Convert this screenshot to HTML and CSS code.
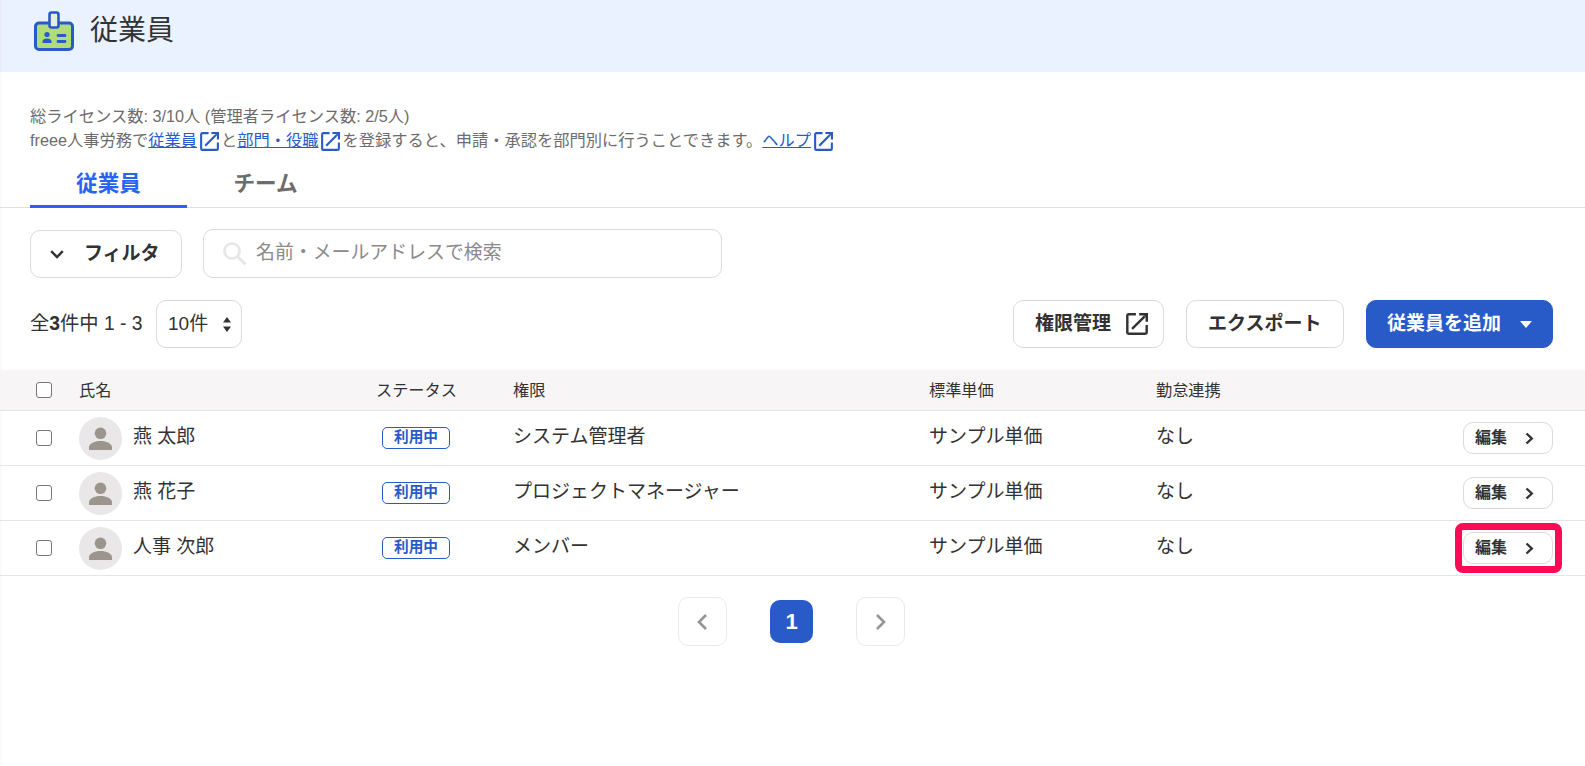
FILE: index.html
```html
<!DOCTYPE html>
<html lang="ja">
<head>
<meta charset="UTF-8">
<meta name="viewport" content="width=device-width, initial-scale=1.0">
<title>従業員</title>
<link rel="stylesheet" href="styles.css">
</head>
<body>
<!-- shared icons -->
<svg class="defs">
    <symbol id="external" viewBox="0 0 20 20">
        <path d="M9 1.2H2.4a1.2 1.2 0 0 0-1.2 1.2v15.2a1.2 1.2 0 0 0 1.2 1.2h15.2a1.2 1.2 0 0 0 1.2-1.2V11" fill="none" stroke="currentColor" stroke-width="2.2"/>
        <path d="M5.5 14.5L17 3" fill="none" stroke="currentColor" stroke-width="2.2"/>
        <path d="M12 0h8v8h-2.2V3.6L16.4 2.2H12z" fill="currentColor"/>
    </symbol>
    <symbol id="person" viewBox="0 0 43 43">
        <circle cx="21.5" cy="16.3" r="5.8" fill="#9b958d"/>
        <path d="M10 33v-2.5C10 26.5 15.5 24 21.5 24S33 26.5 33 30.5V33z" fill="#9b958d"/>
    </symbol>
    <symbol id="chevron" viewBox="0 0 9 13">
        <path d="M1.5 1.5L6.8 6.5L1.5 11.5" fill="none" stroke="currentColor" stroke-width="2.4"/>
    </symbol>
</svg>

<div class="header">
    <svg class="header-icon" viewBox="0 0 40 40">
        <rect x="1.5" y="12" width="37" height="26.5" rx="3.5" fill="#b2dc7a" stroke="#285ac8" stroke-width="3"/>
        <rect x="15.5" y="1.5" width="9" height="15" rx="2" fill="#e6efd8" stroke="#285ac8" stroke-width="2.6"/>
        <circle cx="13" cy="23.5" r="2.6" fill="#285ac8"/>
        <path d="M8.5 32v-1.500c0-2 2-3 4.500-3s4.500 1 4.500 3V32z" fill="#285ac8"/>
        <path d="M24 24.5h7M24 30.5h7" stroke="#285ac8" stroke-width="2.8" stroke-linecap="round"/>
    </svg>
    <h1 class="title">従業員</h1>
</div>

<div class="info">
    <p>総ライセンス数: 3/10人 (管理者ライセンス数: 2/5人)</p>
    <p>freee人事労務で<a href="#">従業員</a><svg class="link-icon"><use href="#external"/></svg>と<a href="#">部門・役職</a><svg class="link-icon"><use href="#external"/></svg>を登録すると、申請・承認を部門別に行うことできます。<a href="#">ヘルプ</a><svg class="link-icon"><use href="#external"/></svg></p>
</div>

<div class="tabs">
    <div class="tab active">従業員</div>
    <div class="tab">チーム</div>
</div>

<div class="filters">
    <button class="btn btn-filter"><svg class="icon-down" viewBox="0 0 14 9"><path d="M1.2 1.2L7 7L12.8 1.2" fill="none" stroke="currentColor" stroke-width="2.4"/></svg><span>フィルタ</span></button>
    <div class="search">
        <svg class="search-icon" viewBox="0 0 24 24"><circle cx="9" cy="9" r="7.5" fill="none" stroke="#e6e6e6" stroke-width="2.6"/><path d="M14.5 14.5L22.5 22.5" stroke="#e6e6e6" stroke-width="3"/></svg>
        <input type="text" class="search-input" placeholder="名前・メールアドレスで検索">
    </div>
</div>

<div class="toolbar">
    <div class="count">全<b>3</b>件中 1 - 3</div>
    <div class="select"><span>10件</span><svg class="select-icon" viewBox="0 0 8 15"><path d="M4 0L8 5.5H0zM4 15L0 9.5H8z" fill="#323232"/></svg></div>
    <div class="actions">
        <button class="btn btn-role"><span>権限管理</span><svg class="role-icon"><use href="#external"/></svg></button>
        <button class="btn btn-export"><span>エクスポート</span></button>
        <button class="btn btn-primary"><span>従業員を追加</span><svg class="caret" viewBox="0 0 12 7"><path d="M0 0h12L6 7z" fill="currentColor"/></svg></button>
    </div>
</div>

<table class="list">
    <colgroup>
        <col class="col-check"><col class="col-name"><col class="col-status"><col class="col-role"><col class="col-price"><col class="col-link"><col>
    </colgroup>
    <thead>
        <tr>
            <th><input type="checkbox" class="check"></th>
            <th>氏名</th>
            <th>ステータス</th>
            <th>権限</th>
            <th>標準単価</th>
            <th>勤怠連携</th>
            <th></th>
        </tr>
    </thead>
    <tbody>
        <tr>
            <td><input type="checkbox" class="check"></td>
            <td><div class="person"><svg class="avatar"><use href="#person"/></svg><span class="text">燕 太郎</span></div></td>
            <td><div class="badge"><span>利用中</span></div></td>
            <td><span class="text">システム管理者</span></td>
            <td><span class="text">サンプル単価</span></td>
            <td><span class="text">なし</span></td>
            <td><button class="btn btn-edit"><span>編集</span><svg class="chevron"><use href="#chevron"/></svg></button></td>
        </tr>
        <tr>
            <td><input type="checkbox" class="check"></td>
            <td><div class="person"><svg class="avatar"><use href="#person"/></svg><span class="text">燕 花子</span></div></td>
            <td><div class="badge"><span>利用中</span></div></td>
            <td><span class="text">プロジェクトマネージャー</span></td>
            <td><span class="text">サンプル単価</span></td>
            <td><span class="text">なし</span></td>
            <td><button class="btn btn-edit"><span>編集</span><svg class="chevron"><use href="#chevron"/></svg></button></td>
        </tr>
        <tr>
            <td><input type="checkbox" class="check"></td>
            <td><div class="person"><svg class="avatar"><use href="#person"/></svg><span class="text">人事 次郎</span></div></td>
            <td><div class="badge"><span>利用中</span></div></td>
            <td><span class="text">メンバー</span></td>
            <td><span class="text">サンプル単価</span></td>
            <td><span class="text">なし</span></td>
            <td><button class="btn btn-edit marked"><span>編集</span><svg class="chevron"><use href="#chevron"/></svg></button></td>
        </tr>
    </tbody>
</table>

<div class="pager">
    <button class="page-btn"><svg class="page-icon prev" viewBox="0 0 10 16"><path d="M1 1L8 8L1 15" fill="none" stroke="currentColor" stroke-width="2.6"/></svg></button>
    <div class="page-current">1</div>
    <button class="page-btn"><svg class="page-icon" viewBox="0 0 10 16"><path d="M1 1L8 8L1 15" fill="none" stroke="currentColor" stroke-width="2.6"/></svg></button>
</div>
</body>
</html>
```
FILE: styles.css
```css
* {
    box-sizing: border-box;
}
body {
    margin: 0;
    height: 766px;
    overflow: hidden;
    font-family: "Liberation Sans", "Noto Sans CJK JP", sans-serif;
    font-size: 19px;
    color: #323232;
    background: linear-gradient(to right, #f8f8f8, #fff 3px);
}
.defs {
    display: none;
}
.header {
    display: flex;
    height: 72px;
    padding: 11px 0 0 34px;
    background: linear-gradient(to right, #e5ebf7, #ebf2ff 3px);
}
.header-icon {
    width: 40px;
    height: 40px;
}
.title {
    margin: 0 0 0 16px;
    font-size: 28px;
    font-weight: normal;
    line-height: 40px;
}
.info {
    height: 97px;
    padding: 32px 0 0 30px;
    font-size: 16.25px;
    color: #6e6b6b;
}
.info p {
    display: flex;
    margin: 0;
    height: 24px;
    line-height: 24px;
    white-space: pre;
}
.info a {
    color: #285ac8;
}
.link-icon {
    width: 19px;
    height: 19px;
    margin: 4px 2.5px 0 2.5px;
    color: #285ac8;
}
.tabs {
    display: flex;
    height: 39px;
    padding-left: 30px;
    border-bottom: 1px solid #e1dfdf;
}
.tab {
    width: 157px;
    height: 39px;
    line-height: 30px;
    font-size: 21.6px;
    font-weight: bold;
    text-align: center;
    color: #6e6b6b;
}
.tab.active {
    color: #2864f0;
    border-bottom: 3px solid #2864f0;
}
.btn {
    display: flex;
    align-items: center;
    height: 48px;
    padding: 0 21px;
    font-family: inherit;
    font-size: 19px;
    font-weight: bold;
    color: #323232;
    background-color: #fff;
    border: 1px solid #dcdada;
    border-radius: 10px;
    white-space: nowrap;
}
.btn span {
    line-height: 24px;
    margin-bottom: 1px;
}
.filters {
    display: flex;
    align-items: flex-end;
    gap: 21px;
    height: 70px;
    padding-left: 30px;
}
.btn-filter {
    width: 152px;
    padding: 0 19px;
    gap: 20px;
}
.icon-down {
    width: 14px;
    height: 9px;
}
.search {
    display: flex;
    align-items: center;
    width: 519px;
    height: 49px;
    padding-left: 19px;
    border: 1px solid #dcdada;
    border-radius: 10px;
}
.search-icon {
    width: 24px;
    height: 24px;
}
.search-input {
    width: 440px;
    height: 30px;
    margin: 0 0 2px 9px;
    padding: 0;
    border: none;
    font-family: inherit;
    font-size: 18.9px;
}
.search-input::placeholder {
    color: #8c8989;
}
.toolbar {
    display: flex;
    align-items: center;
    height: 48px;
    margin: 22px 32px 22px 30px;
}
.count {
    width: 126px;
    font-size: 19.3px;
    white-space: nowrap;
    line-height: 24px;
}
.select {
    display: flex;
    align-items: center;
    justify-content: space-between;
    width: 86px;
    height: 48px;
    padding: 0 10px 0 11px;
    border: 1px solid #dcdada;
    border-radius: 10px;
    line-height: 24px;
}
.select-icon {
    width: 8px;
    height: 15px;
}
.actions {
    display: flex;
    gap: 22px;
    margin-left: auto;
}
.btn-role {
    width: 151px;
    gap: 15px;
}
.role-icon {
    flex: none;
    width: 22px;
    height: 22px;
}
.btn-export {
    width: 158px;
}
.btn-primary {
    width: 187px;
    gap: 19px;
    padding: 0 20px;
    color: #fff;
    background-color: #285ac8;
    border-color: #285ac8;
}
.caret {
    width: 12px;
    height: 7px;
}
.list {
    width: 100%;
    table-layout: fixed;
    border-collapse: separate;
    border-spacing: 0;
}
.list th {
    height: 41px;
    padding: 0;
    font-size: 16.2px;
    font-weight: normal;
    line-height: 24px;
    text-align: left;
    background-color: #f7f5f6;
    border-bottom: 1px solid #e6e4e4;
}
.list td {
    height: 55px;
    padding: 0;
    border-bottom: 1px solid #e6e4e4;
}
.col-check { width: 79px; }
.col-name { width: 297px; }
.col-status { width: 137px; }
.col-role { width: 416px; }
.col-price { width: 227px; }
.col-link { width: 200px; }
.check {
    display: block;
    width: 16px;
    height: 16px;
    margin: 0 0 0 36px;
    appearance: none;
    background-color: #fff;
    border: 1px solid #767676;
    border-radius: 3px;
}
.text {
    display: block;
    line-height: 24px;
    margin-bottom: 2px;
    white-space: nowrap;
}
.person {
    display: flex;
    align-items: center;
    gap: 11px;
}
.avatar {
    width: 43px;
    height: 43px;
    border-radius: 50%;
    background-color: #e9e7e7;
}
.badge {
    display: flex;
    justify-content: center;
    width: 68px;
    height: 22px;
    margin-left: 6px;
    border: 1px solid #285ac8;
    border-radius: 5px;
    font-size: 14.67px;
    font-weight: bold;
    line-height: 19px;
    color: #285ac8;
}
.btn-edit {
    width: 90px;
    height: 32px;
    margin: 0 32px 0 auto;
    padding: 0 11px;
    gap: 18px;
    font-size: 16px;
}
.chevron {
    flex: none;
    width: 9px;
    height: 13px;
}
.marked {
    position: relative;
}
.marked::after {
    content: "";
    position: absolute;
    top: -10px;
    right: -10px;
    bottom: -10px;
    left: -9px;
    border: 7px solid #ff0a54;
    border-radius: 8px;
}
.pager {
    display: flex;
    align-items: center;
    justify-content: center;
    gap: 43px;
    margin: 21px 2px 0 0;
}
.page-btn {
    display: flex;
    align-items: center;
    justify-content: center;
    width: 49px;
    height: 49px;
    padding: 0;
    color: #969494;
    background-color: #fff;
    border: 1px solid #ebeaea;
    border-radius: 10px;
}
.page-icon {
    width: 10px;
    height: 16px;
}
.prev {
    margin-right: 2px;
    transform: scaleX(-1);
}
.page-current {
    width: 43px;
    height: 43px;
    line-height: 44px;
    text-align: center;
    font-size: 22px;
    font-weight: bold;
    color: #fff;
    background-color: #285ac8;
    border-radius: 10px;
}
```
